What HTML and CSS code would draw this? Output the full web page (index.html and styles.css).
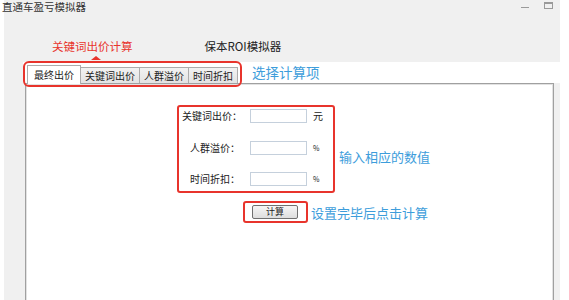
FILE: index.html
```html
<!DOCTYPE html>
<html lang="zh-CN">
<head>
    <meta charset="UTF-8">
    <title>直通车盈亏模拟器</title>
    <link rel="stylesheet" href="styles.css">
</head>
<body>
    <div class="window">
        <div class="titlebar">
            <span class="title">直通车盈亏模拟器</span>
            <div class="controls">
                <span class="min"></span>
                <span class="max"></span>
            </div>
        </div>

        <!-- top level tools -->
        <div class="modes">
            <div class="mode active">
                <span>关键词出价计算</span>
                <i class="arrow"></i>
            </div>
            <div class="mode">
                <span>保本ROI模拟器</span>
            </div>
        </div>

        <div class="strip">
            <ul class="tabs">
                <li class="tab selected">最终出价</li>
                <li class="tab">关键词出价</li>
                <li class="tab">人群溢价</li>
                <li class="tab">时间折扣</li>
            </ul>
            <span class="note note-tabs">选择计算项</span>
        </div>

        <div class="panel">
            <div class="form-row">
                <div class="fields">
                    <label>关键词出价：</label>
                    <input type="text">
                    <span class="unit">元</span>

                    <label>人群溢价：</label>
                    <input type="text">
                    <span class="unit pct">%</span>

                    <label>时间折扣：</label>
                    <input type="text">
                    <span class="unit pct">%</span>
                </div>
                <span class="note note-fields">输入相应的数值</span>
            </div>

            <div class="button-row">
                <div class="btn-box">
                    <button type="button">计算</button>
                </div>
                <span class="note">设置完毕后点击计算</span>
            </div>
        </div>
    </div>
</body>
</html>
```

FILE: styles.css
```css
* {
    margin: 0;
    padding: 0;
    box-sizing: border-box;
}

body {
    font-family: "Noto Sans CJK SC", "Noto Sans", sans-serif;
    background-color: #ffffff;
    width: 569px;
    height: 300px;
    overflow: hidden;
}

.window {
    margin-left: 4px;
    width: 556px;
    height: 300px;
    background-color: #f0f0f0;
    display: flex;
    flex-direction: column;
}

.titlebar {
    height: 14px;
    display: flex;
    justify-content: space-between;
    align-items: flex-start;
}

.title {
    margin-left: -2px;
    padding-top: 1px;
    font-size: 10.5px;
    line-height: 11px;
    color: #333;
}

.controls {
    display: flex;
    align-items: flex-start;
    gap: 15px;
    margin-right: 7px;
    margin-top: 2px;
}

.controls .min {
    width: 8px;
    height: 1px;
    margin-top: 5px;
    background-color: #9a9a9a;
}

.controls .max {
    width: 9px;
    height: 7px;
    border: 1px solid #9a9a9a;
    border-top-width: 2px;
}

/* top level tools */
.modes {
    display: flex;
    height: 48px;
    padding-top: 25px;
    padding-left: 48px;
    gap: 72px;
}

.mode {
    display: flex;
    flex-direction: column;
    align-items: center;
    font-size: 11.5px;
    line-height: 14px;
    color: #222;
}

.mode.active {
    color: #e8342c;
}

.arrow {
    margin-top: 3px;
    margin-left: 8px;
    width: 0;
    height: 0;
    border-left: 5px solid transparent;
    border-right: 5px solid transparent;
    border-bottom: 4px solid #e8342c;
}

.strip {
    height: 21px;
    margin-left: 19px;
    padding-left: 4px;
    background-color: #fff;
    display: flex;
    align-items: flex-end;
}

.tabs {
    list-style: none;
    display: flex;
    align-items: flex-end;
    position: relative;
    z-index: 2;
    outline: 2px solid #e8342c;
    outline-offset: 2px;
    border-radius: 2px;
}

.tab {
    height: 16px;
    padding: 0 4px;
    font-size: 10px;
    line-height: 15px;
    color: #222;
    border: 1px solid #acacac;
    border-bottom: none;
    border-left: none;
    background: linear-gradient(#f2f2f2, #e3e3e3);
}

.tab.selected {
    height: 19px;
    margin-bottom: -1px;
    padding: 0 6px;
    line-height: 17px;
    border-left: 1px solid #acacac;
    background: #fff;
}

.note {
    font-size: 13px;
    line-height: 15px;
    color: #3d9ddb;
}

.note-tabs {
    margin-left: 14px;
    align-self: center;
    font-size: 13.5px;
}

.panel {
    flex: 1;
    margin-left: 21px;
    margin-right: 6px;
    background-color: #fff;
    border: 1px solid #a0a0a0;
    border-bottom: none;
    box-shadow: inset 1px 1px 0 #e2e2e2, inset -1px 0 0 #e2e2e2;
}

.form-row {
    display: flex;
    align-items: flex-start;
    gap: 4px;
    margin-top: 21px;
    margin-left: 151px;
}

.fields {
    display: grid;
    grid-template-columns: 58px 57px 16px;
    grid-auto-rows: 14px;
    column-gap: 10px;
    row-gap: 17.5px;
    align-items: center;
    padding: 2px 0 5px 3px;
    border: 2px solid #e8342c;
    border-radius: 3px;
}

.fields label {
    text-align: right;
    font-size: 10px;
    line-height: 14px;
    color: #222;
    white-space: nowrap;
}

.fields input {
    width: 57px;
    height: 14px;
    border: 1px solid #c5d0dc;
    background: #fff;
}

.unit {
    margin-left: -4px;
    font-size: 10px;
    line-height: 14px;
    color: #222;
}

.unit.pct {
    font-size: 7px;
}

.note-fields {
    margin-top: 44px;
}

.button-row {
    display: flex;
    align-items: center;
    gap: 3px;
    margin-top: 8px;
    margin-left: 217px;
}

.btn-box {
    padding: 2px 8px 2px 7px;
    border: 2px solid #e8342c;
    border-radius: 3px;
}

button {
    display: block;
    width: 46px;
    height: 14px;
    font-family: inherit;
    font-size: 9px;
    line-height: 12px;
    color: #222;
    border: 1px solid #707070;
    border-radius: 2px;
    background: linear-gradient(#f6f6f6, #dedede);
}
```
